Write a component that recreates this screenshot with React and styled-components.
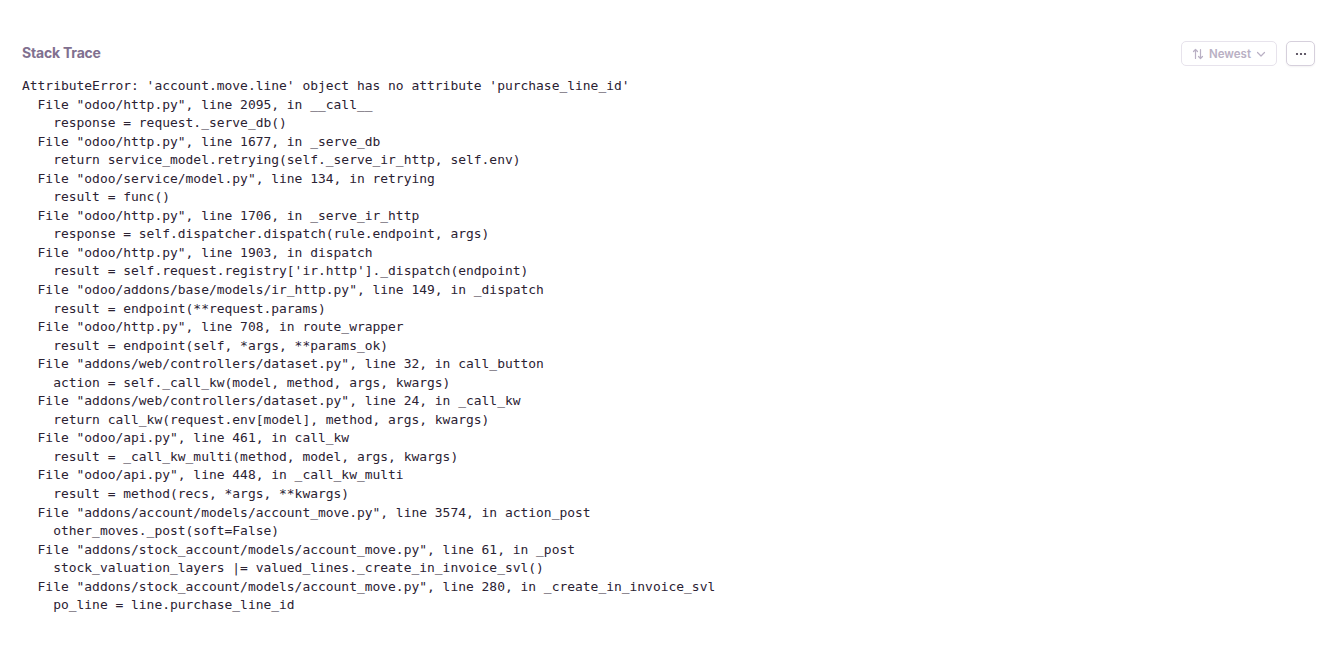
import { createGlobalStyle, styled } from 'styled-components';

const GlobalStyle = createGlobalStyle`
  html, body {
    margin: 0;
    padding: 0;
    background: #ffffff;
  }
`;

const Page = styled.div`
  padding: 41px 17px 0 22px;
  font-family: 'Inter', 'Noto Sans', sans-serif;
`;

const Header = styled.div`
  display: flex;
  align-items: center;
  justify-content: space-between;
  height: 25px;
`;

const Title = styled.h3`
  margin: 0 0 2px;
  font-size: 14px;
  font-weight: 700;
  color: #80708f;
  letter-spacing: -0.2px;
`;

const Actions = styled.div`
  display: flex;
  gap: 9px;
`;

const Button = styled.button`
  display: flex;
  align-items: center;
  justify-content: center;
  gap: 5px;
  height: 25px;
  width: ${(p) => p.$width}px;
  padding: 0;
  border: 1px solid ${(p) => (p.$muted ? '#e7e3ec' : '#d6d0dc')};
  border-radius: 5px;
  background: #fff;
  color: ${(p) => (p.$muted ? '#b9b0c4' : '#3e3446')};
  font-family: 'Inter', 'Noto Sans', sans-serif;
  font-size: 11.5px;
  font-weight: 600;
  box-shadow: ${(p) => (p.$muted ? 'none' : '0 1px 2px rgba(43,34,51,0.06)')};
`;

const Trace = styled.pre`
  margin: 11px 0 0;
  font-family: 'DejaVu Sans Mono', 'Liberation Mono', monospace;
  font-size: 12.95px;
  line-height: 18.54px;
  color: #2b2233;
  white-space: pre;
`;

const trace = `AttributeError: 'account.move.line' object has no attribute 'purchase_line_id'
  File "odoo/http.py", line 2095, in __call__
    response = request._serve_db()
  File "odoo/http.py", line 1677, in _serve_db
    return service_model.retrying(self._serve_ir_http, self.env)
  File "odoo/service/model.py", line 134, in retrying
    result = func()
  File "odoo/http.py", line 1706, in _serve_ir_http
    response = self.dispatcher.dispatch(rule.endpoint, args)
  File "odoo/http.py", line 1903, in dispatch
    result = self.request.registry['ir.http']._dispatch(endpoint)
  File "odoo/addons/base/models/ir_http.py", line 149, in _dispatch
    result = endpoint(**request.params)
  File "odoo/http.py", line 708, in route_wrapper
    result = endpoint(self, *args, **params_ok)
  File "addons/web/controllers/dataset.py", line 32, in call_button
    action = self._call_kw(model, method, args, kwargs)
  File "addons/web/controllers/dataset.py", line 24, in _call_kw
    return call_kw(request.env[model], method, args, kwargs)
  File "odoo/api.py", line 461, in call_kw
    result = _call_kw_multi(method, model, args, kwargs)
  File "odoo/api.py", line 448, in _call_kw_multi
    result = method(recs, *args, **kwargs)
  File "addons/account/models/account_move.py", line 3574, in action_post
    other_moves._post(soft=False)
  File "addons/stock_account/models/account_move.py", line 61, in _post
    stock_valuation_layers |= valued_lines._create_in_invoice_svl()
  File "addons/stock_account/models/account_move.py", line 280, in _create_in_invoice_svl
    po_line = line.purchase_line_id`;

function SortIcon() {
  return (
    <svg width="12" height="12" viewBox="0 0 12 12" fill="none" stroke="currentColor" strokeWidth="1.2" strokeLinecap="round" strokeLinejoin="round">
      <path d="M3.5 10.5V1.5M1.5 3.5l2-2 2 2" />
      <path d="M8.5 1.5v9M6.5 8.5l2 2 2-2" />
    </svg>
  );
}

function ChevronIcon() {
  return (
    <svg width="10" height="10" viewBox="0 0 10 10" fill="none" stroke="currentColor" strokeWidth="1.2" strokeLinecap="round" strokeLinejoin="round">
      <path d="M1.5 3.5L5 7l3.5-3.5" />
    </svg>
  );
}

function DotsIcon() {
  return (
    <svg width="12" height="4" viewBox="0 0 12 4" fill="currentColor">
      <circle cx="2" cy="2" r="1.1" />
      <circle cx="6" cy="2" r="1.1" />
      <circle cx="10" cy="2" r="1.1" />
    </svg>
  );
}

export default function App() {
  return (
    <>
      <GlobalStyle />
      <Page>
        <Header>
          <Title>Stack Trace</Title>
          <Actions>
            <Button $muted $width={96} disabled>
              <SortIcon />
              Newest
              <ChevronIcon />
            </Button>
            <Button $width={29}>
              <DotsIcon />
            </Button>
          </Actions>
        </Header>
        <Trace>{trace}</Trace>
      </Page>
    </>
  );
}
